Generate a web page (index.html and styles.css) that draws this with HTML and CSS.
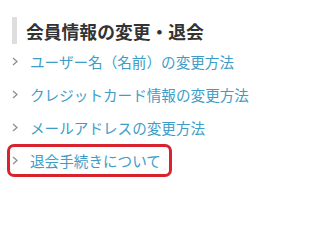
FILE: index.html
```html
<!DOCTYPE html>
<html lang="ja">
<head>
<meta charset="utf-8">
<link rel="stylesheet" href="styles.css">
</head>
<body>
<div class="page">
  <h2 class="heading">会員情報の変更・退会</h2>
  <ul class="links">
    <li class="item"><svg class="chev" viewBox="0 0 6 9"><polyline points="1,1 5,4.5 1,8"/></svg><a href="#">ユーザー名（名前）の変更方法</a></li>
    <li class="item"><svg class="chev" viewBox="0 0 6 9"><polyline points="1,1 5,4.5 1,8"/></svg><a href="#">クレジットカード情報の変更方法</a></li>
    <li class="item"><svg class="chev" viewBox="0 0 6 9"><polyline points="1,1 5,4.5 1,8"/></svg><a href="#">メールアドレスの変更方法</a></li>
    <li class="item highlight"><svg class="chev" viewBox="0 0 6 9"><polyline points="1,1 5,4.5 1,8"/></svg><a href="#">退会手続きについて</a></li>
  </ul>
</div>
</body>
</html>
```
FILE: styles.css
```css
html, body {
  margin: 0;
  padding: 0;
  background: #fff;
}
.page {
  padding: 17px 12px 0 12px;
  font-family: "Noto Sans CJK JP", "Noto Sans", sans-serif;
}
.heading {
  margin: 0;
  height: 27px;
  display: flex;
  align-items: center;
  border-left: 5px solid #dedede;
  padding-left: 9px;
  font-size: 17.8px;
  font-weight: bold;
  color: #333;
  letter-spacing: 0;
}
.links {
  list-style: none;
  margin: 1px 0 0 0;
  padding: 0;
}
.item {
  display: flex;
  align-items: center;
  height: 33px;
  box-sizing: border-box;
}
.chev {
  width: 6px;
  height: 9px;
  flex: none;
  margin-right: 12px;
}
.chev polyline {
  fill: none;
  stroke: #8f8f8f;
  stroke-width: 1.3;
}
.item a {
  color: #3d9dc8;
  text-decoration: none;
  font-size: 14.6px;
}
.highlight {
  border: 3px solid #d8232f;
  border-radius: 7px;
  margin-left: -5px;
  padding-left: 2px;
  width: 165px;
}
```
